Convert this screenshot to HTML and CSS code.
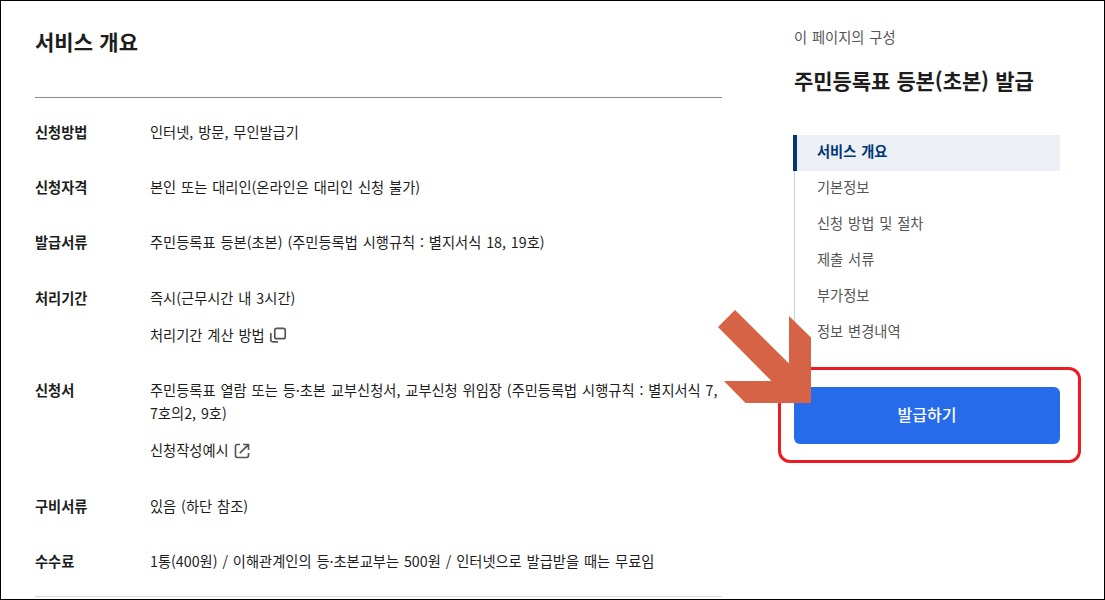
FILE: index.html
```html
<!DOCTYPE html>
<html lang="ko">
<head>
  <meta charset="UTF-8">
  <title>주민등록표 등본(초본) 발급</title>
  <link rel="stylesheet" href="styles.css">
</head>
<body>
<div class="page">
  <main class="content">
    <h2>서비스 개요</h2>
    <dl class="info">
      <div class="row">
        <dt>신청방법</dt>
        <dd>인터넷, 방문, 무인발급기</dd>
      </div>
      <div class="row">
        <dt>신청자격</dt>
        <dd>본인 또는 대리인(온라인은 대리인 신청 불가)</dd>
      </div>
      <div class="row">
        <dt>발급서류</dt>
        <dd>주민등록표 등본(초본) (주민등록법 시행규칙 : 별지서식 18, 19호)</dd>
      </div>
      <div class="row">
        <dt>처리기간</dt>
        <dd>
          즉시(근무시간 내 3시간)
          <a class="more" href="#">처리기간 계산 방법
            <svg width="18" height="18" viewBox="0 0 18 18">
              <rect x="5.8" y="2.3" width="10.4" height="10.4" rx="1.8"/>
              <path d="M1.8 7v7a1.8 1.8 0 0 0 1.8 1.8H9"/>
            </svg>
          </a>
        </dd>
      </div>
      <div class="row">
        <dt>신청서</dt>
        <dd>
          주민등록표 열람 또는 등·초본 교부신청서, 교부신청 위임장 (주민등록법 시행규칙 : 별지서식 7,<br>7호의2, 9호)
          <a class="more" href="#">신청작성예시
            <svg width="18" height="18" viewBox="0 0 18 18">
              <path d="M7 2.5H4.3a1.8 1.8 0 0 0-1.8 1.8v9.4a1.8 1.8 0 0 0 1.8 1.8h9.4a1.8 1.8 0 0 0 1.8-1.8V11M10 2.5h5.5V8M15.2 2.8l-8.4 8.4"/>
            </svg>
          </a>
        </dd>
      </div>
      <div class="row">
        <dt>구비서류</dt>
        <dd>있음 (하단 참조)</dd>
      </div>
      <div class="row">
        <dt>수수료</dt>
        <dd>1통(400원) / 이해관계인의 등·초본교부는 500원 / 인터넷으로 발급받을 때는 무료임</dd>
      </div>
    </dl>
  </main>

  <aside class="side">
    <p class="caption">이 페이지의 구성</p>
    <h3>주민등록표 등본(초본) 발급</h3>
    <ul class="nav">
      <li class="active"><a href="#">서비스 개요</a></li>
      <li><a href="#">기본정보</a></li>
      <li><a href="#">신청 방법 및 절차</a></li>
      <li><a href="#">제출 서류</a></li>
      <li><a href="#">부가정보</a></li>
      <li><a href="#">정보 변경내역</a></li>
    </ul>
    <div class="apply">
      <button type="button">발급하기</button>
      <div class="mark"></div>
      <svg class="arrow" width="93" height="93" viewBox="0 0 93 93">
        <path d="M17 0L71 53.5V6L93 27.5V93H27.5L6 71H53.5L0 17z"/>
      </svg>
    </div>
  </aside>
</div>
</body>
</html>
```

FILE: styles.css
```css
* {
  box-sizing: border-box;
}

body {
  margin: 0;
  background: #fff;
  color: #1d1d1d;
  font-family: "Noto Sans CJK KR", sans-serif;
  font-size: 14.25px;
  line-height: 23.2px;
  word-spacing: 0.9px;
}

h2, h3, p, ul, dl, dd {
  margin: 0;
  padding: 0;
}

a {
  color: inherit;
  text-decoration: none;
}

.page {
  display: flex;
  height: 600px;
  border: 1px solid #000;
  overflow: hidden;
}

.content {
  width: 687px;
  margin-left: 34px;
  padding-top: 24px;
}

h2, h3 {
  font-size: 21px;
  line-height: 32px;
  font-weight: 700;
  word-spacing: 0.5px;
}

.info {
  margin-top: 40px;
  padding: 6px 0 8.4px;
  border-top: 1px solid #8a8a8e;
  border-bottom: 1px solid #d6d6d6;
}

.row {
  display: flex;
  padding: 16px 0;
}

.row dt {
  flex: 0 0 115px;
  font-weight: 700;
}

.row dd {
  white-space: nowrap;
}

.more {
  display: flex;
  align-items: center;
  gap: 4px;
  margin-top: 14px;
}

.more svg {
  margin-top: 2px;
  fill: none;
  stroke: #555;
  stroke-width: 1.7;
}

.side {
  width: 266px;
  margin-left: 72px;
  padding-top: 24px;
}

.caption {
  color: #555;
}

.side h3 {
  margin-top: 16px;
  letter-spacing: -0.1px;
  white-space: nowrap;
}

.nav {
  margin-top: 39px;
  list-style: none;
  border-left: 1px solid #c6cfe3;
}

.nav li {
  height: 36px;
  padding-left: 22px;
  line-height: 32px;
  color: #555;
}

.nav .active {
  margin-left: -2px;
  padding-left: 20px;
  border-left: 4px solid #003675;
  background: #eceff4;
  color: #003675;
  font-weight: 700;
}

.apply {
  position: relative;
  margin-top: 36px;
}

.apply button {
  display: block;
  width: 266px;
  height: 57px;
  padding: 0 0 4px;
  border: 0;
  border-radius: 6px;
  background: #256bea;
  color: #fff;
  font: 500 16px "Noto Sans CJK KR", sans-serif;
}

.mark {
  position: absolute;
  top: -20px;
  left: -16px;
  width: 303px;
  height: 96px;
  border: 3px solid #ed1c24;
  border-radius: 12px;
}

.arrow {
  position: absolute;
  top: -77px;
  left: -76px;
  fill: #d66345;
}
```
